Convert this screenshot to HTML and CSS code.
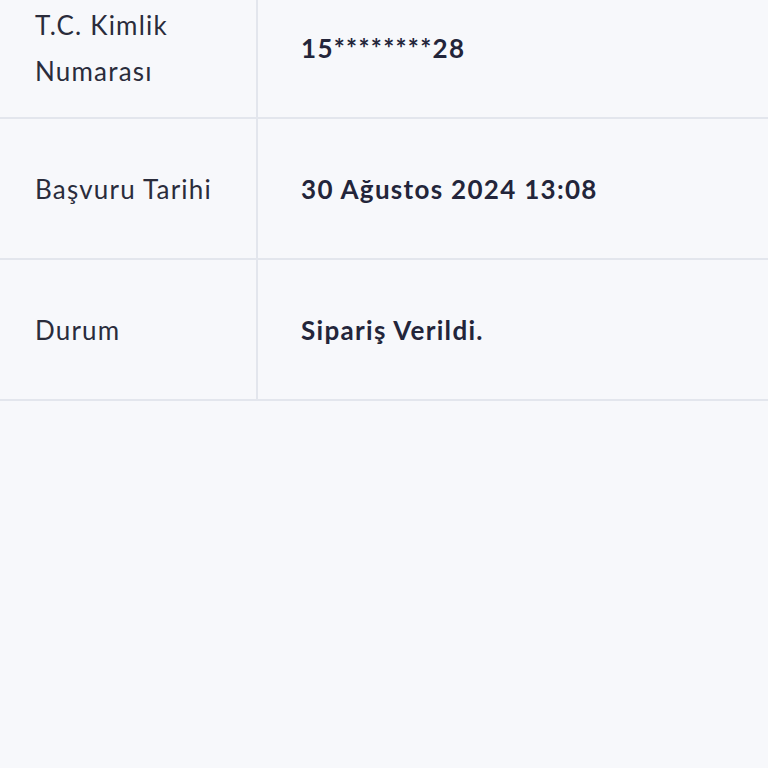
FILE: index.html
```html
<!DOCTYPE html>
<html lang="tr">
<head>
    <meta charset="UTF-8">
    <meta name="viewport" content="width=device-width, initial-scale=1.0">
    <title>Başvuru Detayı</title>
    <link rel="stylesheet" href="styles.css">
</head>
<body>
    <div class="detail-table">
        <div class="row">
            <div class="label">T.C. Kimlik<br>Numarası</div>
            <div class="value">15********28</div>
        </div>
        <div class="row">
            <div class="label">Başvuru Tarihi</div>
            <div class="value">30 Ağustos 2024 13:08</div>
        </div>
        <div class="row">
            <div class="label">Durum</div>
            <div class="value">Sipariş Verildi.</div>
        </div>
    </div>
</body>
</html>
```

FILE: styles.css
```css
body {
    margin: 0;
    height: 100vh;
    overflow: hidden;
    background: #f7f8fb;
    font-family: 'Lato', 'Noto Sans', sans-serif;
    color: #2a2c3b;
}

/* page is scrolled a little, first row is partly hidden */
.detail-table {
    margin-top: -22px;
}

.row {
    display: grid;
    grid-template-columns: 258px 1fr;
    height: 139px;
    border-bottom: 2px solid #e3e6ed;
}

.label {
    display: flex;
    align-items: center;
    padding-left: 35px;
    font-size: 26px;
    line-height: 46px;
    letter-spacing: 1.2px;
    border-right: 2px solid #e3e6ed;
}

.value {
    display: flex;
    align-items: center;
    padding-left: 43px;
    font-size: 26px;
    font-weight: bold;
    letter-spacing: 1.3px;
    color: #23253a;
}
```
